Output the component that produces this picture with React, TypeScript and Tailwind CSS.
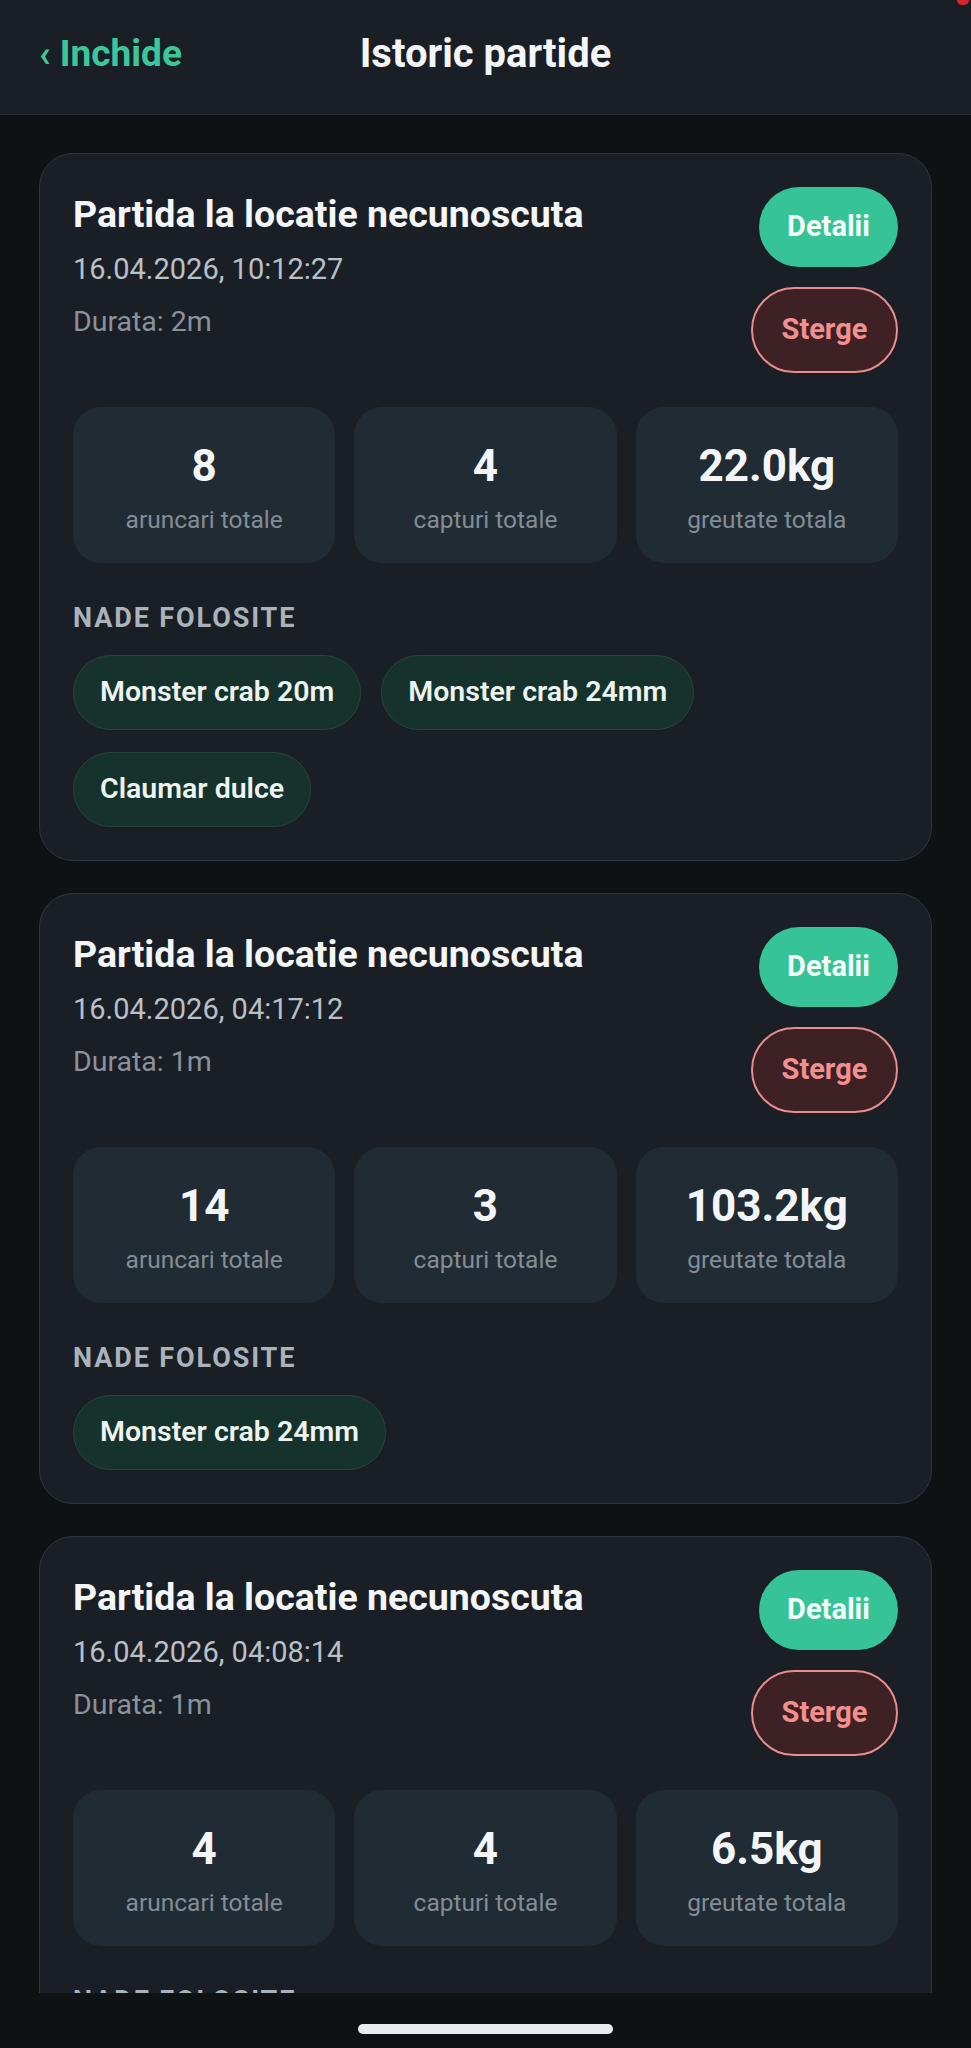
type Session = {
  date: string;
  duration: string;
  casts: string;
  catches: string;
  weight: string;
  baits: string[];
};

const sessions: Session[] = [
  {
    date: "16.04.2026, 10:12:27",
    duration: "2m",
    casts: "8",
    catches: "4",
    weight: "22.0kg",
    baits: ["Monster crab 20m", "Monster crab 24mm", "Claumar dulce"],
  },
  {
    date: "16.04.2026, 04:17:12",
    duration: "1m",
    casts: "14",
    catches: "3",
    weight: "103.2kg",
    baits: ["Monster crab 24mm"],
  },
  {
    date: "16.04.2026, 04:08:14",
    duration: "1m",
    casts: "4",
    catches: "4",
    weight: "6.5kg",
    baits: ["Monster crab 24mm"],
  },
];

function Stat({ value, label }: { value: string; label: string }) {
  return (
    <div className="flex h-[156px] flex-col items-center rounded-[28px] bg-[#212b33] pt-[34px]">
      <span className="text-[44px] font-bold leading-[50px] text-[#f3f5f7]">{value}</span>
      <span className="mt-[14px] text-[24.5px] leading-[30px] text-[#838d96]">{label}</span>
    </div>
  );
}

function SessionCard({ s }: { s: Session }) {
  return (
    <div className="shrink-0 rounded-[34px] border border-[#2d363f] bg-[#1a1f26] p-[33px]">
      <div className="flex items-start justify-between">
        <div className="pt-[5px]">
          <p className="text-[37.5px] font-bold leading-[44px] text-[#f3f5f7]">Partida la locatie necunoscuta</p>
          <p className="mt-[13px] text-[29px] leading-[40px] text-[#b9c0c7]">{s.date}</p>
          <p className="mt-[13px] text-[28.5px] leading-[40px] text-[#8a939b]">Durata: {s.duration}</p>
        </div>
        <div className="flex flex-col items-end gap-[20px]">
          <button
            type="button"
            className="flex h-[80px] w-[139px] items-center justify-center rounded-full bg-[#35c397] text-[29px] font-bold text-[#f4fffa]"
          >
            Detalii
          </button>
          <button
            type="button"
            className="flex h-[86px] w-[147px] items-center justify-center rounded-full border-2 border-[#e98d8d] bg-[#3e2125] text-[29px] font-bold text-[#f28f8f]"
          >
            Sterge
          </button>
        </div>
      </div>

      <div className="mt-[34px] grid grid-cols-3 gap-[19px]">
        <Stat value={s.casts} label="aruncari totale" />
        <Stat value={s.catches} label="capturi totale" />
        <Stat value={s.weight} label="greutate totala" />
      </div>

      <p className="mt-[39px] text-[27px] font-bold leading-[32px] tracking-[0.07em] text-[#aab3bb]">NADE FOLOSITE</p>
      <div className="mt-[21px] flex flex-wrap gap-x-[20px] gap-y-[22px]">
        {s.baits.map((b) => (
          <span
            key={b}
            className="flex h-[75px] items-center rounded-full border border-[#28453d] bg-[#15332c] px-[26px] text-[28.5px] font-semibold text-[#eef3f1]"
          >
            {b}
          </span>
        ))}
      </div>
    </div>
  );
}

export default function App() {
  return (
    <div className="relative flex h-[2048px] w-[971px] flex-col overflow-hidden bg-[#0e1215] font-['Roboto',sans-serif]">
      <div className="absolute right-[2px] top-[-5px] h-[10px] w-[12px] rounded-full bg-[#d8262c]" />

      <header className="grid h-[115px] shrink-0 grid-cols-[1fr_auto_1fr] border-b border-[#232a31] bg-[#1a1f26] pt-[31px]">
        <span className="pl-[39px] text-[37px] font-bold leading-[46px] text-[#3cc79b]">‹ Inchide</span>
        <span className="text-[40px] font-bold leading-[46px] text-[#f3f5f7]">Istoric partide</span>
        <span />
      </header>

      <main className="flex min-h-0 flex-1 flex-col gap-[32px] overflow-hidden px-[39px] pt-[38px]">
        {sessions.map((s) => (
          <SessionCard key={s.date} s={s} />
        ))}
      </main>

      <div className="flex h-[55px] shrink-0 justify-center bg-[#0e1215] pt-[31px]">
        <div className="h-[10px] w-[255px] rounded-full bg-[#e9ebed]" />
      </div>
    </div>
  );
}
